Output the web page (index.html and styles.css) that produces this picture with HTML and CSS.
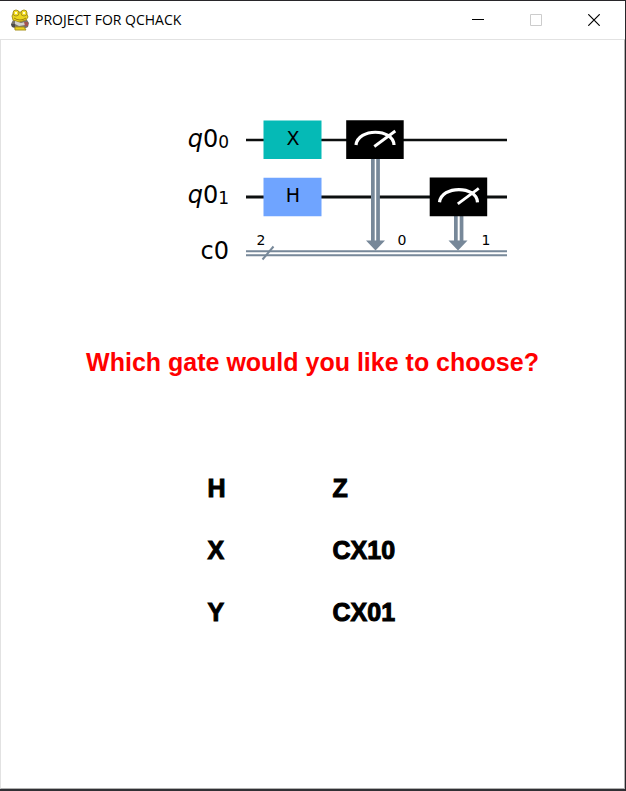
FILE: index.html
```html
<!DOCTYPE html>
<html lang="en">
<head>
<meta charset="utf-8">
<meta name="viewport" content="width=device-width, initial-scale=1">
<title>PROJECT FOR QCHACK</title>
<link rel="stylesheet" href="styles.css">
</head>
<body>
<div class="window">
  <header class="titlebar">
    <svg class="app-icon" viewBox="0 0 20 22" aria-hidden="true">
      <path d="M3 11h14l2 3-1 4-4 2H6l-4-2-1-3z" fill="#77736d"/>
      <path d="M4 3l-2 4 1 4 6 2 7-2 2-3-2-5z" fill="#ecd61c" stroke="#a8921c"/>
      <circle cx="6" cy="4" r="3" fill="#f5df24" stroke="#a8921c"/>
      <circle cx="14" cy="4" r="3" fill="#f5df24" stroke="#a8921c"/>
      <path d="M5 4h2M13 4h2" stroke="#fffbd0" stroke-width="2"/>
      <path d="M4 9q6 4 12 0" fill="none" stroke="#9c8212"/>
      <path d="M5 12l6 2 4-1v3l-6 1-4-2z" fill="#d5d2cb"/>
      <path d="M14 13h4v4h-3z" fill="#a35450"/>
      <path d="M1 15h4v3H2z" fill="#4d4b4b"/>
      <path d="M5 18h9l2 3H5z" fill="#ecd31c" stroke="#a8921c"/>
    </svg>
    <h1 class="title">PROJECT FOR QCHACK</h1>
    <div class="controls">
      <button class="control" type="button" aria-label="Minimize"><svg viewBox="0 0 12 12"><path d="M0 5.5h12" stroke="#000"/></svg></button>
      <button class="control" type="button" aria-label="Maximize" disabled><svg viewBox="0 0 12 12"><path d="M.5.5h11v11H.5z" fill="none" stroke="#ccc"/></svg></button>
      <button class="control" type="button" aria-label="Close"><svg viewBox="0 0 12 12"><path d="M.3.3l11.4 11.4M11.7.3L.3 11.7" stroke="#000" stroke-width="1.2"/></svg></button>
    </div>
  </header>
  <main class="screen">
    <svg class="circuit" viewBox="103 110 420 160" role="img" aria-label="Quantum circuit">
      <g stroke="#0c0f0f">
        <path d="M246 140h261" stroke-width="2.4"/>
        <path d="M246 197h261" stroke-width="3"/>
      </g>
      <g stroke="#778899">
        <path d="M246 251.3h261M246 255.3h261" stroke-width="2"/>
        <path d="M262.500 259.500l11-13" stroke-width="2"/>
      </g>
      <g fill="#fff">
        <path d="M373.500 159h4v82h-4zM456.500 216h4v25h-4z"/>
      </g>
      <g fill="#778899">
        <path d="M371 159h3.700v82h-3.700zM376.200 159h3.700v82h-3.700zM454 216h3.700v25h-3.700zM459.700 216h3.700v25h-3.700z"/>
        <path d="M366 240.500h19l-9.500 10zM448.500 240.500h19l-9.500 10z"/>
      </g>
      <path d="M263.500 120.500h58v38.500h-58z" fill="#05bab6"/>
      <path d="M263.500 177.700h58v38.500h-58z" fill="#6fa4ff"/>
      <g id="meter">
        <path d="M346.200 120.200h57.500v38.700h-57.500z" fill="#000"/>
        <path d="M356 145c2-17 37-17 38 0" fill="none" stroke="#fff" stroke-width="3.200"/>
        <path d="M374.300 146.500l21-15.500" stroke="#fff" stroke-width="2.800"/>
      </g>
      <use href="#meter" x="83.500" y="57.300"/>
      <g class="wire-label">
        <text x="229" y="147" text-anchor="end"><tspan class="italic">q</tspan>0<tspan class="sub" dy="1">0</tspan></text>
        <text x="229" y="203" text-anchor="end"><tspan class="italic">q</tspan>0<tspan class="sub" dy="1">1</tspan></text>
        <text x="229" y="259" text-anchor="end">c0</text>
      </g>
      <g class="gate-label" text-anchor="middle">
        <text x="293" y="145">X</text>
        <text x="293" y="202">H</text>
      </g>
      <g class="bit-label" text-anchor="middle">
        <text x="261" y="245">2</text>
        <text x="402" y="245">0</text>
        <text x="486" y="245">1</text>
      </g>
    </svg>
    <h2 class="question">Which gate would you like to choose?</h2>
    <div class="gates">
      <button class="gate" type="button">H</button>
      <button class="gate" type="button">Z</button>
      <button class="gate" type="button">X</button>
      <button class="gate" type="button">CX10</button>
      <button class="gate" type="button">Y</button>
      <button class="gate" type="button">CX01</button>
    </div>
  </main>
</div>
</body>
</html>
```
FILE: styles.css
```css
* { box-sizing: border-box; }

body {
  margin: 0;
  background: #fff;
  font-family: "Liberation Sans", Arial, sans-serif;
}

.window {
  display: flex;
  flex-direction: column;
  min-height: 100vh;
  border: 1px solid #28262a;
  border-left: 0;
  border-bottom: 2px solid #303034;
}

.titlebar {
  display: flex;
  align-items: center;
  height: 38px;
  padding: 0 2px 0 10px;
}

.app-icon {
  width: 20px;
  height: 22px;
}

.title {
  flex: 1;
  margin: 0 0 0 5px;
  font: 400 14px/20px "Open Sans", "Segoe UI", sans-serif;
  color: #000;
}

.controls { display: flex; }

.control {
  display: grid;
  place-items: center;
  width: 58px;
  height: 38px;
  padding: 0;
  border: 0;
  background: none;
}

.control svg {
  width: 12px;
  height: 12px;
}

.screen {
  flex: 1;
  display: flex;
  flex-direction: column;
  align-items: center;
  padding-top: 70px;
  border: 1px solid #e2e2e2;
  border-right-color: #b0b0b0;
  border-bottom-color: #b0b0b0;
}

.circuit {
  width: 420px;
  max-width: 100%;
}

.wire-label {
  font: 24px "DejaVu Sans", sans-serif;
}

.italic { font-style: italic; }

.sub { font-size: 17px; }

.gate-label { font: 19px "DejaVu Sans", sans-serif; }

.bit-label { font: 14px "DejaVu Sans", sans-serif; }

.question {
  margin: 77px 0 0;
  font-size: 25px;
  line-height: 30px;
  color: #f00;
  text-align: center;
}

.gates {
  display: grid;
  grid-template-columns: 1fr 1fr;
  width: 290px;
  max-width: 100%;
  margin-top: 80px;
  padding-left: 40px;
}

.gate {
  height: 62px;
  padding: 0;
  border: 0;
  background: none;
  font: 700 25px/30px "Liberation Sans", Arial, sans-serif;
  color: #000;
  text-align: left;
  -webkit-text-stroke: 1px #000;
}
```
